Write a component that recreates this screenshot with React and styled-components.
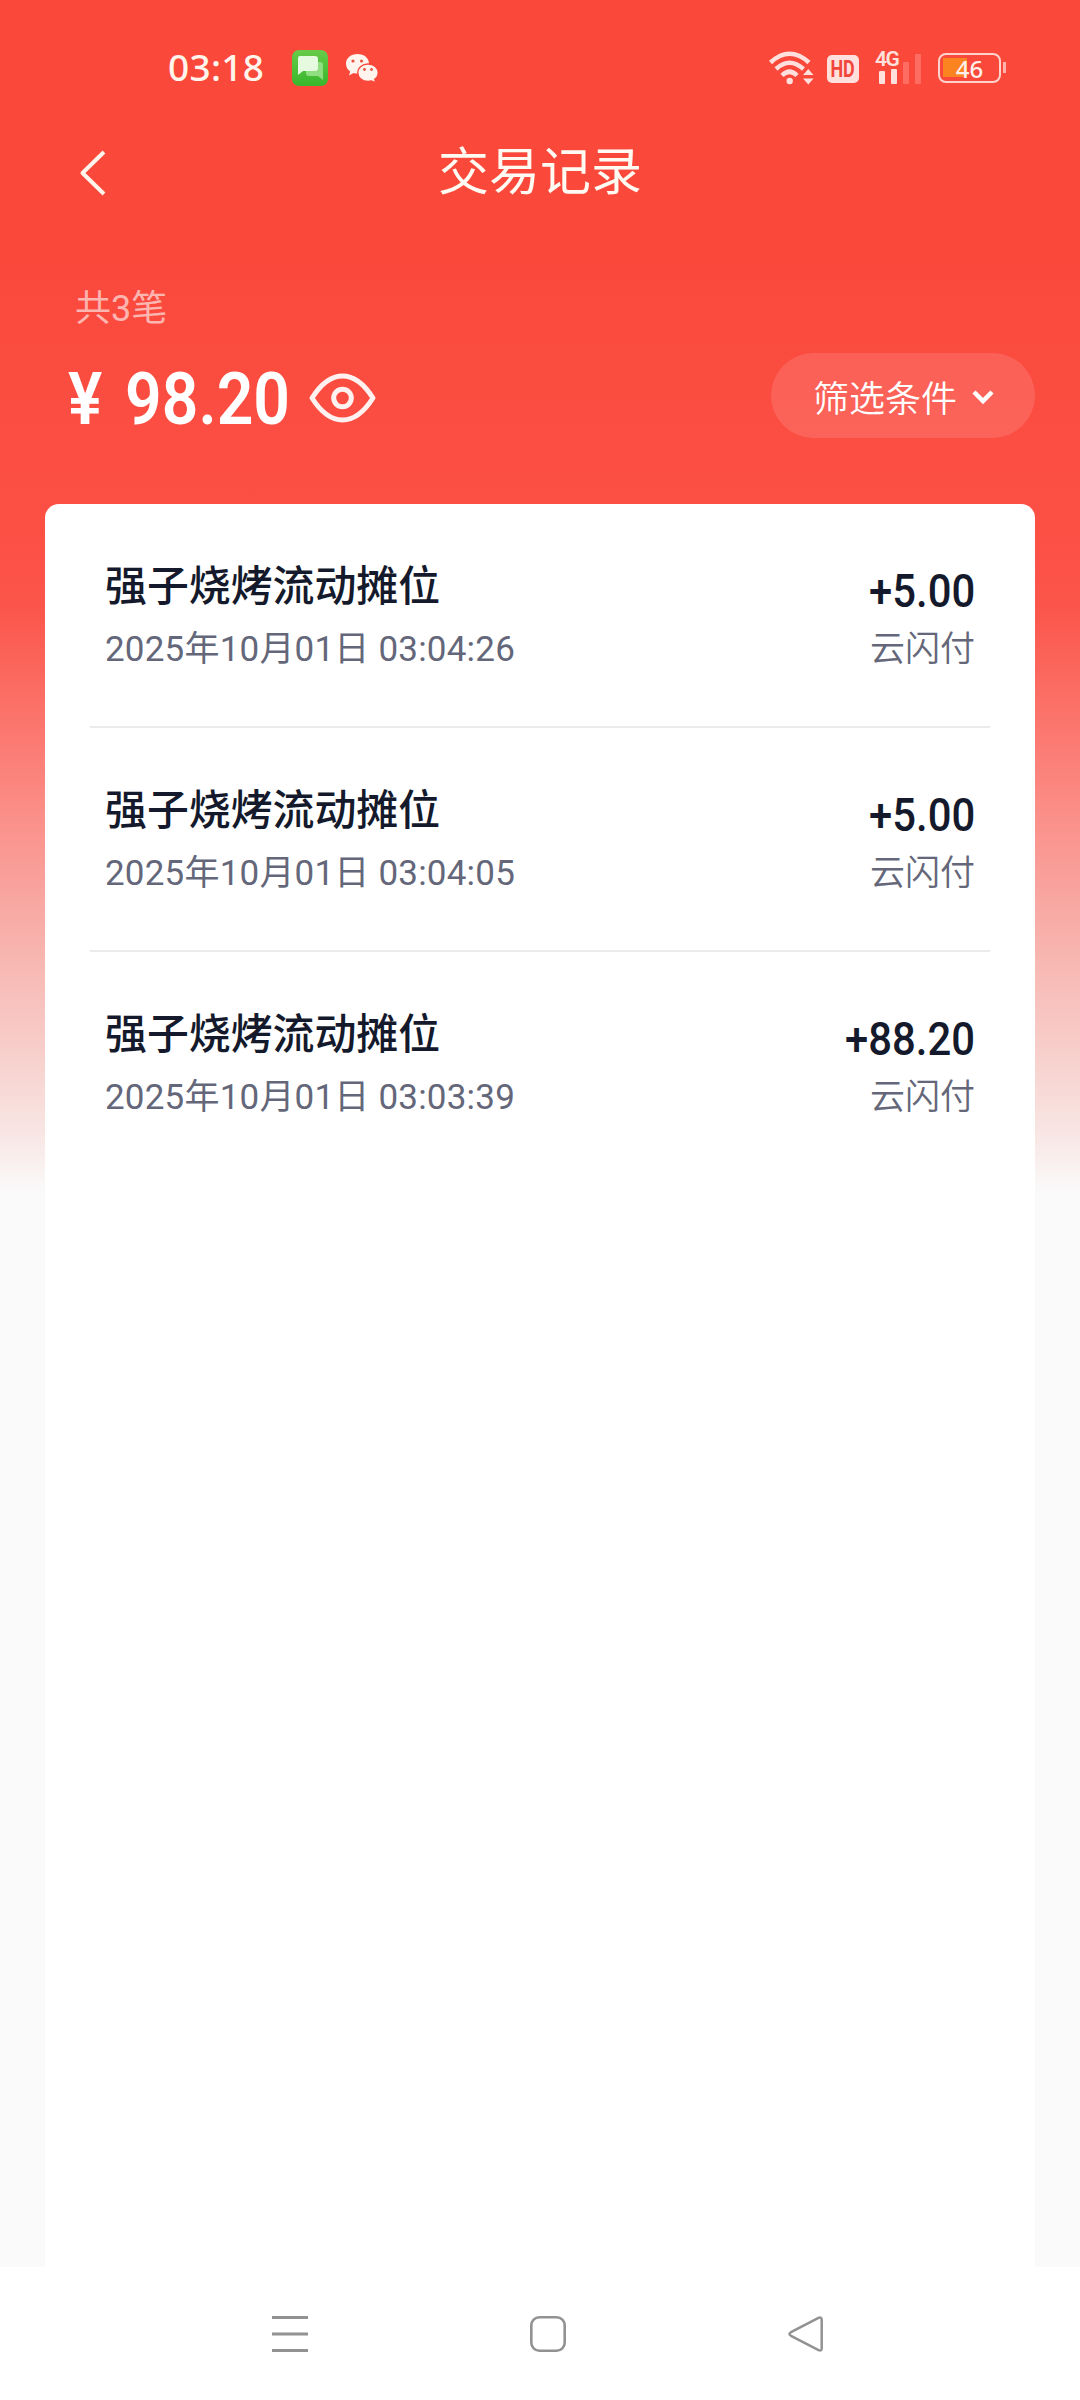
import React from "react";
import styled, { createGlobalStyle } from "styled-components";

const GlobalStyle = createGlobalStyle`
  body {
    margin: 0;
    background: #fafafa;
    font-family: Roboto, "Noto Sans CJK SC", sans-serif;
  }
`;

const StyledPage = styled.div`
  display: flex;
  flex-direction: column;
  width: 1080px;
  height: 2400px;
  overflow: hidden;
  background: linear-gradient(
    180deg,
    #fa483b 0,
    #fa483b 240px,
    #fb4b3f 340px,
    #fc5146 560px,
    #fb564b 610px,
    #fb938d 830px,
    #f8aca7 920px,
    #f7ceca 1050px,
    #f8e8e6 1140px,
    #fafafa 1192px
  );
`;

// Status bar
const StyledStatusBar = styled.div`
  display: flex;
  align-items: center;
  box-sizing: border-box;
  height: 136px;
  padding: 0 79px 0 168px;
`;

const StyledClock = styled.span`
  width: 124px;
  margin-top: -2px;
  color: #fff5ec;
  font-family: "Noto Sans", sans-serif;
  font-size: 37px;
  font-weight: 500;
  letter-spacing: 0.3px;
  line-height: 50px;
`;

const StyledStatusIcon = styled.svg`
  display: block;
  flex: none;
  margin-left: ${(props) => props.$gap || 0}px;
`;

const StyledSpacer = styled.div`
  flex: 1;
`;

const StyledHdBadge = styled.div`
  display: flex;
  justify-content: center;
  width: 32px;
  height: 28px;
  margin: 2px 1px 0 12px;
  border-radius: 5px;
  background: #ffe0dc;
  color: #f2463b;
  font-size: 23px;
  font-weight: 700;
  line-height: 29px;
`;

const StyledHdText = styled.span`
  transform: scaleX(0.78);
`;

const StyledSignal = styled.div`
  display: flex;
  flex-direction: column;
  position: relative;
  width: 47px;
  height: 32px;
  margin-left: 15px;
`;

const StyledNetwork = styled.span`
  position: absolute;
  left: 0;
  top: -1px;
  color: #ffe0dc;
  font-size: 21px;
  font-weight: 600;
  line-height: 16px;
  letter-spacing: -1.5px;
`;

const StyledBattery = styled.div`
  display: flex;
  position: relative;
  align-items: center;
  justify-content: center;
  box-sizing: border-box;
  width: 63px;
  height: 30px;
  margin-left: 16px;
  border: 2.5px solid #ffd3cd;
  border-radius: 8px;
  color: #fff0ea;
  font-family: "Noto Sans", sans-serif;
  font-size: 24px;
  font-weight: 500;
  background: linear-gradient(#fb8320, #fb8320) 3px 3px / 24px 19px no-repeat;

  &::after {
    content: "";
    position: absolute;
    right: -7px;
    top: 7px;
    width: 3px;
    height: 11px;
    background: #ffb3aa;
  }
`;

// Title bar
const StyledTitleBar = styled.div`
  display: grid;
  grid-template-columns: 140px 1fr 140px;
  align-items: center;
  height: 73px;
`;

const StyledBackButton = styled.button`
  display: flex;
  margin: 0 0 0 78px;
  padding: 0;
  border: 0;
  background: none;
`;

const StyledTitle = styled.h1`
  margin: 0;
  padding-top: 1px;
  color: #fffaf2;
  font-size: 51px;
  font-weight: 400;
  line-height: 72px;
  text-align: center;
`;

// Summary
const StyledSummary = styled.div`
  display: flex;
  flex-direction: column;
  box-sizing: border-box;
  height: 295px;
  padding: 76px 45px 0 68px;
`;

const StyledCount = styled.div`
  padding-left: 7px;
  color: rgba(255, 255, 255, 0.6);
  font-size: 36px;
  font-weight: 400;
  line-height: 48px;
`;

const StyledTotalRow = styled.div`
  display: flex;
  align-items: center;
  height: 85px;
  margin-top: 20px;
`;

const StyledCurrency = styled.span`
  width: 57px;
  padding-top: 8px;
  color: #fff;
  font-size: 73px;
  font-weight: 600;
  line-height: 85px;
  transform: scaleX(0.88);
  transform-origin: left;
`;

const StyledTotal = styled.span`
  width: 184px;
  padding-top: 8px;
  color: #fff;
  font-size: 73px;
  font-weight: 600;
  line-height: 85px;
  white-space: nowrap;
  transform: scaleX(0.88);
  transform-origin: left;
`;

const StyledEye = styled.svg`
  display: block;
  margin-top: 5px;
`;

const StyledFilterButton = styled.button`
  display: flex;
  align-items: center;
  box-sizing: border-box;
  width: 264px;
  height: 85px;
  margin-left: auto;
  padding: 0 0 0 42px;
  border: 0;
  border-radius: 43px;
  background: rgba(255, 255, 255, 0.12);
  color: #fff;
  font-family: inherit;
  font-size: 36px;
  font-weight: 350;
`;

// Transactions
const StyledCard = styled.div`
  flex: none;
  box-sizing: border-box;
  width: 990px;
  height: 1763px;
  margin: 0 auto;
  padding: 0 45px;
  border-radius: 14px 14px 0 0;
  background: #fff;
`;

const StyledRow = styled.div`
  display: flex;
  justify-content: space-between;
  box-sizing: border-box;
  height: 224px;
  padding: 54px 15px 0 15px;
  border-bottom: 2px solid ${(props) => (props.$last ? "transparent" : "#ebebed")};
`;

const StyledColumn = styled.div`
  display: flex;
  flex-direction: column;
  align-items: ${(props) => props.$align || "flex-start"};
`;

const StyledMerchant = styled.div`
  color: #141a2c;
  font-size: 41.9px;
  font-weight: 500;
  line-height: 58px;
`;

const StyledDetail = styled.div`
  margin-top: 7px;
  color: #646779;
  font-size: 35px;
  font-weight: ${(props) => props.$weight || 350};
  letter-spacing: ${(props) => props.$spacing || 0}px;
  line-height: 53px;
`;

const StyledAmount = styled.div`
  height: 58px;
  color: #141a2c;
  font-size: 47px;
  font-weight: 550;
  line-height: 65px;
  transform: scaleX(0.89);
  transform-origin: right;
`;

// System navigation
const StyledNavBar = styled.div`
  display: flex;
  flex: 1;
  align-items: center;
  justify-content: space-between;
  padding: 0 255px 0 271px;
  background: #fff;
`;

const transactions = [
  { id: 1, name: "强子烧烤流动摊位", time: "2025年10月01日 03:04:26", amount: "+5.00", method: "云闪付" },
  { id: 2, name: "强子烧烤流动摊位", time: "2025年10月01日 03:04:05", amount: "+5.00", method: "云闪付" },
  { id: 3, name: "强子烧烤流动摊位", time: "2025年10月01日 03:03:39", amount: "+88.20", method: "云闪付" },
];

function StatusBar() {
  return (
    <StyledStatusBar>
      <StyledClock>03:18</StyledClock>
      <StyledStatusIcon width="36" height="36" viewBox="0 0 36 36">
        <defs>
          <linearGradient id="msg" x1="0" y1="0" x2="0" y2="1">
            <stop offset="0" stopColor="#67cb49" />
            <stop offset="1" stopColor="#38b62c" />
          </linearGradient>
        </defs>
        <rect width="36" height="36" rx="7" fill="url(#msg)" />
        <path d="M15 12h13q3 0 3 3v15l-5-4H17q-3 0-3-3v-8z" fill="#8fdf80" />
        <path d="M8 6h15q3 0 3 3v9q0 3-3 3H11l-5 4V8q0-2 2-2z" fill="#e6fae0" />
      </StyledStatusIcon>
      <StyledStatusIcon $gap={17} width="35" height="30" viewBox="0 0 35 30">
        <path
          d="M12.500 1C5.800 1 1 5.200 1 10.700c0 3.300 1.600 5.900 4.200 7.800L4 22.400l4.600-2.300c1.300.4 2.600.5 3.900.5 6.700 0 11.500-4.300 11.500-9.900S19.200 1 12.500 1z"
          fill="#fff4ee"
        />
        <path
          d="M23 11c-5.700 0-10.200 3.800-10.200 8.700 0 4.900 4.500 8.700 10.200 8.700 1.200 0 2.400-.2 3.500-.5l4.200 1.900-1-3.500c2.200-1.600 3.500-3.900 3.500-6.600C33.200 14.800 28.700 11 23 11z"
          fill="#fff4ee"
          stroke="#fb483c"
          strokeWidth="1.300"
        />
        <g fill="#e8533f">
          <circle cx="8" cy="8" r="1.600" />
          <circle cx="16.500" cy="8" r="1.600" />
          <circle cx="19.500" cy="16.500" r="1.400" />
          <circle cx="26.500" cy="16.500" r="1.400" />
        </g>
      </StyledStatusIcon>
      <StyledSpacer />
      <StyledStatusIcon width="46" height="36" viewBox="0 0 46 36">
        <g fill="none" stroke="#ffe0dc" strokeWidth="4.500">
          <path d="M1.500 12.500Q20.500-5 40 12.500" />
          <path d="M7 19Q20.500 6.500 34.500 19" />
          <path d="M13 25.500Q20.500 18 28 25.500" />
        </g>
        <circle cx="20.700" cy="31" r="3.200" fill="#ffe0dc" />
        <path d="M34 25l5.300-6 5.200 6zM34 28.500h10.500l-5.200 6z" fill="#ffe0dc" />
      </StyledStatusIcon>
      <StyledHdBadge>
        <StyledHdText>HD</StyledHdText>
      </StyledHdBadge>
      <StyledSignal>
        <StyledNetwork>4G</StyledNetwork>
        <StyledStatusIcon width="47" height="32" viewBox="0 0 47 32">
          <rect x="4" y="19" width="6" height="13" rx="1" fill="#ffe0dc" />
          <rect x="16" y="17" width="6" height="15" rx="1" fill="#ffe0dc" />
          <rect x="28" y="10" width="6" height="22" rx="1" fill="#fe6c62" />
          <rect x="40" y="2" width="6" height="30" rx="1" fill="#fe6c62" />
        </StyledStatusIcon>
      </StyledSignal>
      <StyledBattery>46</StyledBattery>
    </StyledStatusBar>
  );
}

function Transaction({ item, last }) {
  return (
    <StyledRow $last={last}>
      <StyledColumn>
        <StyledMerchant>{item.name}</StyledMerchant>
        <StyledDetail $weight={400} $spacing={0.2}>
          {item.time}
        </StyledDetail>
      </StyledColumn>
      <StyledColumn $align="flex-end">
        <StyledAmount>{item.amount}</StyledAmount>
        <StyledDetail>{item.method}</StyledDetail>
      </StyledColumn>
    </StyledRow>
  );
}

export default function App() {
  return (
    <StyledPage>
      <GlobalStyle />
      <StatusBar />

      <StyledTitleBar>
        <StyledBackButton>
          <svg width="28" height="48" viewBox="0 0 28 48">
            <path d="M26 3L4.500 24 26 45" fill="none" stroke="#fff4ec" strokeWidth="4" strokeLinejoin="round" />
          </svg>
        </StyledBackButton>
        <StyledTitle>交易记录</StyledTitle>
      </StyledTitleBar>

      <StyledSummary>
        <StyledCount>共3笔</StyledCount>
        <StyledTotalRow>
          <StyledCurrency>¥</StyledCurrency>
          <StyledTotal>98.20</StyledTotal>
          <StyledEye width="68" height="52" viewBox="0 0 68 52">
            <g fill="none" stroke="#fff1ef" strokeWidth="5" strokeLinejoin="round">
              <path d="M3 26Q17 4 33.500 4T64 26Q50 48 33.500 48T3 26z" />
              <circle cx="33.500" cy="26" r="8.800" />
            </g>
          </StyledEye>
          <StyledFilterButton>
            筛选条件
            <StyledStatusIcon $gap={14} width="24" height="18" viewBox="0 0 24 18">
              <path d="M3 5l9 9 9-9" fill="none" stroke="#fff" strokeWidth="4.500" />
            </StyledStatusIcon>
          </StyledFilterButton>
        </StyledTotalRow>
      </StyledSummary>

      <StyledCard>
        {transactions.map((item, index) => (
          <Transaction key={item.id} item={item} last={index === transactions.length - 1} />
        ))}
      </StyledCard>

      <StyledNavBar>
        <svg width="38" height="38" viewBox="0 0 38 38">
          <path d="M1 2.500h36M1 19h36M1 35.500h36" stroke="#929292" strokeWidth="3" />
        </svg>
        <svg width="38" height="38" viewBox="0 0 38 38">
          <rect x="2.300" y="2.300" width="33.400" height="33.400" rx="8" fill="none" stroke="#929292" strokeWidth="2.600" />
        </svg>
        <svg width="38" height="38" viewBox="0 0 38 38">
          <path
            d="M31.500 2.800L4 17.200q-3 1.800 0 3.600l27.500 14.400q3.200 1.200 3.200-2V4.800q0-3.200-3.200-2z"
            fill="none"
            stroke="#929292"
            strokeWidth="2.500"
          />
        </svg>
      </StyledNavBar>
    </StyledPage>
  );
}
